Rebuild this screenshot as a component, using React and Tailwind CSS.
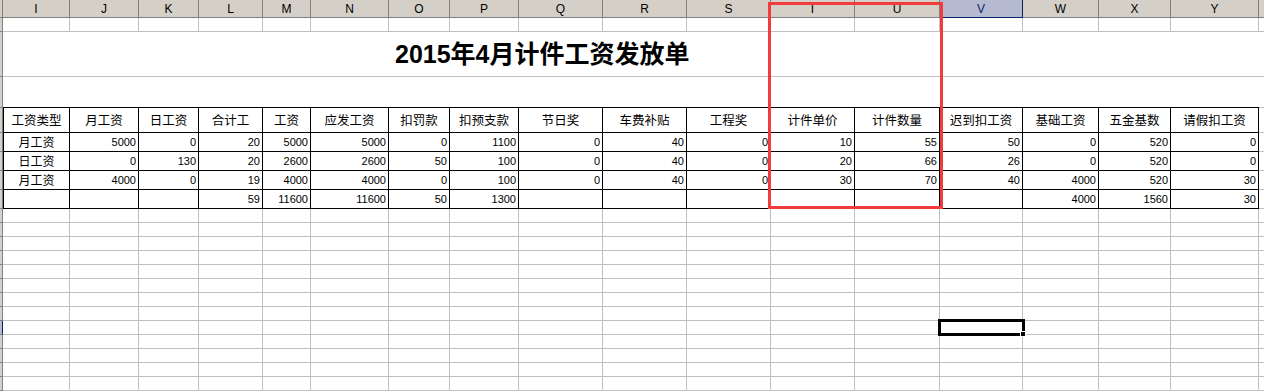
import React from "react";

const cols = [
  { k: "I", w: "w-[67px]" },
  { k: "J", w: "w-[69px]" },
  { k: "K", w: "w-[60px]" },
  { k: "L", w: "w-[64px]" },
  { k: "M", w: "w-[48px]" },
  { k: "N", w: "w-[78px]" },
  { k: "O", w: "w-[61px]" },
  { k: "P", w: "w-[69px]" },
  { k: "Q", w: "w-[84px]" },
  { k: "R", w: "w-[84px]" },
  { k: "S", w: "w-[84px]" },
  { k: "T", w: "w-[84px]" },
  { k: "U", w: "w-[85px]" },
  { k: "V", w: "w-[83px]" },
  { k: "W", w: "w-[76px]" },
  { k: "X", w: "w-[72px]" },
  { k: "Y", w: "w-[88px]" },
  { k: "Z", w: "w-[60px]" },
];

const headers = [
  "工资类型", "月工资", "日工资", "合计工", "工资", "应发工资", "扣罚款", "扣预支款",
  "节日奖", "车费补贴", "工程奖", "计件单价", "计件数量", "迟到扣工资", "基础工资", "五金基数", "请假扣工资",
];

const rows = [
  ["月工资", "5000", "0", "20", "5000", "5000", "0", "1100", "0", "40", "0", "10", "55", "50", "0", "520", "0"],
  ["日工资", "0", "130", "20", "2600", "2600", "50", "100", "0", "40", "0", "20", "66", "26", "0", "520", "0"],
  ["月工资", "4000", "0", "19", "4000", "4000", "0", "100", "0", "40", "0", "30", "70", "40", "4000", "520", "30"],
  ["", "", "", "59", "11600", "11600", "50", "1300", "", "", "", "", "", "", "4000", "1560", "30"],
];

const cjk = "font-['SimSun','Noto_Sans_CJK_SC',sans-serif]";
const num = "font-['Liberation_Sans','Noto_Sans_CJK_SC',sans-serif]";

function RowHead({ selected }) {
  return (
    <div
      className={`w-[3px] shrink-0 border-r border-b ${
        selected ? "bg-[#b6bad0] border-r-[#0a246a] border-b-[#808080]" : "bg-[#d4d0c8] border-[#808080]"
      }`}
    />
  );
}

function GridRow({ selected }) {
  return (
    <div className="flex h-[14px]">
      <RowHead selected={selected} />
      {cols.map((c) => (
        <div key={c.k} className={`${c.w} shrink-0 border-r border-b border-[#c0c0c0]`} />
      ))}
    </div>
  );
}

export default function App() {
  return (
    <div className="relative h-[392px] w-[1264px] overflow-hidden bg-white">
      {/* column letters */}
      <div className="flex h-[18px]">
        <div className="w-[3px] shrink-0 border-r border-b border-[#808080] bg-[#d4d0c8]" />
        {cols.map((c) => (
          <div
            key={c.k}
            className={`${c.w} flex shrink-0 items-center justify-center border-r border-b text-[12px] ${num} ${
              c.k === "V"
                ? "border-[#0a246a] bg-[#b6bad0] text-[#0a246a]"
                : "border-[#808080] bg-[#d4d0c8] text-black"
            }`}
          >
            {c.k === "Z" ? "" : c.k}
          </div>
        ))}
      </div>

      <GridRow />

      {/* title */}
      <div className="flex h-[45px]">
        <RowHead />
        <div className="flex flex-1 items-center border-b border-[#c0c0c0] pl-[392px] pt-[1px]">
          <span className={`text-[25px] font-bold leading-none text-black ${num}`}>2015年4月计件工资发放单</span>
        </div>
      </div>

      <div className="flex h-[31px]">
        <RowHead />
        <div className="w-[1256px] shrink-0 border-b border-black" />
        <div className="flex-1 border-b border-[#c0c0c0]" />
      </div>

      {/* table header */}
      <div className="flex h-[25px]">
        <RowHead />
        {headers.map((h, i) => (
          <div
            key={h}
            className={`${cols[i].w} flex shrink-0 items-center justify-center border-r border-b border-black text-[12.5px] text-black ${cjk} ${
              i === 0 ? "border-l" : ""
            }`}
          >
            {h}
          </div>
        ))}
        <div className="w-[60px] shrink-0 border-r border-b border-[#c0c0c0]" />
      </div>

      {rows.map((r, ri) => (
        <div key={ri} className="flex h-[19px]">
          <RowHead />
          {r.map((v, i) => (
            <div
              key={i}
              className={`${cols[i].w} flex shrink-0 items-center border-r border-b border-black text-black ${
                i === 0 ? `justify-center border-l text-[12px] ${cjk}` : `justify-end pr-[2px] text-[11px] ${num}`
              }`}
            >
              {v}
            </div>
          ))}
          <div className="w-[60px] shrink-0 border-r border-b border-[#c0c0c0]" />
        </div>
      ))}

      {Array.from({ length: 13 }).map((_, i) => (
        <GridRow key={i} selected={i === 8} />
      ))}

      {/* annotation box */}
      <div className="pointer-events-none absolute left-[768px] top-[2px] h-[207px] w-[175px] border-[3px] border-[#f03c3c]" />

      {/* active cell */}
      <div className="pointer-events-none absolute left-[938px] top-[319px] h-[17px] w-[87px] border-[3px] border-black" />
      <div className="pointer-events-none absolute left-[1020px] top-[331px] h-[6px] w-[6px] border border-white bg-black" />
    </div>
  );
}
